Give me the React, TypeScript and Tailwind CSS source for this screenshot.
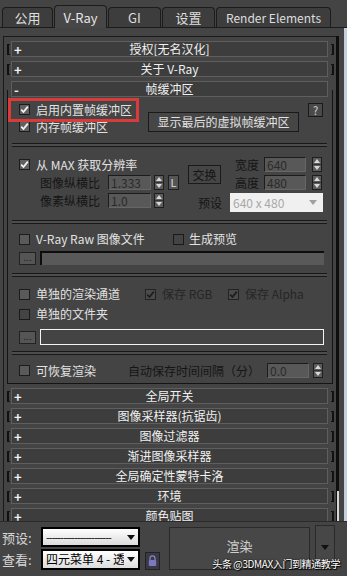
import React from 'react';

type Box = 'on' | 'off' | 'hollow' | 'dim';

function Check({ kind }: { kind: Box }) {
  const base =
    kind === 'on'
      ? 'bg-[#606060] border-[#1c1c1c]'
      : kind === 'off'
      ? 'bg-[#5a5a5a] border-[#1c1c1c]'
      : kind === 'dim'
      ? 'bg-[#4b4b4b] border-[#222]'
      : 'bg-[#444] border-[#1a1a1a]';
  return (
    <div className={`w-[11px] h-[11px] border shrink-0 flex items-center justify-center ${base}`}>
      {(kind === 'on' || kind === 'dim') && (
        <svg width="9" height="9" viewBox="0 0 9 9">
          <path
            d="M1.2 4.6 L3.5 7 L7.8 1.6"
            fill="none"
            stroke={kind === 'on' ? '#f2f2f2' : '#1e1e1e'}
            strokeWidth="1.8"
          />
        </svg>
      )}
    </div>
  );
}

function Bracket({ side }: { side: 'l' | 'r' }) {
  return (
    <div
      className={
        side === 'l'
          ? 'w-[3px] h-[11px] border-l-2 border-y border-[#111]'
          : 'w-[3px] h-[11px] border-r-2 border-y border-[#111]'
      }
    />
  );
}

function HeaderBar({ sign, title }: { sign: string; title: string }) {
  return (
    <div className="w-[317px] h-[16px] border border-[#5e5e5e] bg-[#3d3d3d] flex items-center text-[#f0f0f0] leading-none">
      <span className="w-[14px] pl-[2px] text-[13px] font-bold">{sign}</span>
      <span className="flex-1 text-center text-[12px]">{title}</span>
      <span className="w-[14px]" />
    </div>
  );
}

function Rollout({ title }: { title: string }) {
  return (
    <div className="flex items-center h-[16px] mt-[4px] ml-[3px]">
      <Bracket side="l" />
      <div className="ml-[1px]">
        <HeaderBar sign="+" title={title} />
      </div>
      <div className="ml-[3px]">
        <Bracket side="r" />
      </div>
    </div>
  );
}

function Spinner() {
  return (
    <div className="w-[10px] h-[15px] bg-[#5c5c5c] border border-[#1e1e1e] flex flex-col items-center justify-around">
      <svg width="6" height="4" viewBox="0 0 6 4">
        <path d="M0 4 L3 0 L6 4 Z" fill="#d8d8d8" />
      </svg>
      <div className="w-full h-px bg-[#333]" />
      <svg width="6" height="4" viewBox="0 0 6 4">
        <path d="M0 0 L3 4 L6 0 Z" fill="#d8d8d8" />
      </svg>
    </div>
  );
}

function Field({ value, w }: { value: string; w: string }) {
  return (
    <div
      className={`${w} h-[15px] bg-[#585858] border-t border-l border-[#1c1c1c] border-r border-b border-r-[#666] border-b-[#666] text-[#2a2a2a] text-[12px] leading-[13px] pl-[2px] overflow-hidden`}
    >
      {value}
    </div>
  );
}

function Sep() {
  return <div className="ml-[4px] w-[315px] h-[4px] border-y border-[#181818] bg-[#4d4d4d]" />;
}

function Dots() {
  return (
    <div className="w-[17px] h-[13px] bg-[#555] border border-[#222] text-[#222] text-[10px] leading-[8px] text-center">...</div>
  );
}

const light = 'text-[#e2e2e2]';
const dark = 'text-[#151515]';

export default function App() {
  const tabs = ['公用', 'V-Ray', 'GI', '设置', 'Render Elements'];
  const widths = ['w-[51px]', 'w-[53px]', 'w-[53px]', 'w-[53px]', 'w-[115px]'];
  return (
    <div className="w-[347px] h-[576px] bg-[#444] overflow-hidden flex flex-col text-[12px] leading-none font-['Noto_Sans_CJK_SC','Noto_Sans',sans-serif] select-none">
      {/* tabs */}
      <div className="h-[28px] flex items-end pl-[2px] gap-[1px] border-b border-[#1c1c1c] shrink-0">
        {tabs.map((t, i) =>
          i === 1 ? (
            <div
              key={t}
              className={`${widths[i]} h-[23px] -mb-px bg-[#474747] border-x border-t border-[#1c1c1c] rounded-t-[4px] flex items-center justify-center text-[#e6e6e6] text-[13px]`}
            >
              {t}
            </div>
          ) : (
            <div
              key={t}
              className={`${widths[i]} h-[20px] bg-[#3d3d3d] border-x border-t border-[#1c1c1c] rounded-t-[4px] flex items-center justify-center text-[#dedede] ${i === 4 ? 'text-[12px]' : 'text-[13px]'}`}
            >
              {t}
            </div>
          )
        )}
      </div>

      {/* main scroll region */}
      <div className="h-[493px] flex shrink-0">
        <div className="pl-[3px] pt-[8px]">
          <div className="w-[333px] h-[485px] border-l border-t border-[#1a1a1a] overflow-hidden flex flex-col">
            <Rollout title="授权[无名汉化]" />
            <Rollout title="关于 V-Ray" />

            {/* open rollout */}
            <div className="mt-[4px] ml-[7px]">
              <HeaderBar sign="-" title="帧缓冲区" />
            </div>
            <div className="-mt-[7px] ml-[3px] w-[326px] border-x border-b border-[#141414] pt-[7px]">
              {/* section A */}
              <div className="relative h-[46px] flex items-start">
                <div className="w-[140px] pl-[11px] pt-[7px]">
                  <div className="flex items-center gap-[6px] h-[11px]">
                    <Check kind="on" />
                    <span className={light}>启用内置帧缓冲区</span>
                  </div>
                  <div className="flex items-center gap-[6px] h-[11px] mt-[6px]">
                    <Check kind="on" />
                    <span className={light}>内存帧缓冲区</span>
                  </div>
                </div>
                <div className={`mt-[15px] w-[151px] h-[20px] border border-[#1a1a1a] bg-[#464646] flex items-center justify-center ${light}`}>
                  显示最后的虚拟帧缓冲区
                </div>
                <div className="ml-[9px] mt-[6px] w-[15px] h-[14px] border border-[#1a1a1a] bg-[#4a4a4a] flex items-center justify-center text-[#d8d8d8] text-[11px]">
                  ?
                </div>
                <div className="absolute left-0 top-[1px] w-[131px] h-[24px] border-[3px] border-[#d93b3b]" />
              </div>
              <Sep />

              {/* section B */}
              <div className="h-[73px] flex items-start">
                <div className="w-[180px]">
                  <div className="pl-[11px] pt-[12px] flex items-center gap-[6px] h-[23px]">
                    <Check kind="on" />
                    <span className={light}>从 MAX 获取分辨率</span>
                  </div>
                  <div className="mt-[5px] flex items-center h-[15px]">
                    <span className={`w-[92px] text-right ${dark}`}>图像纵横比</span>
                    <div className="ml-[8px]">
                      <Field value="1.333" w="w-[43px]" />
                    </div>
                    <div className="ml-[3px]">
                      <Spinner />
                    </div>
                    <div className="ml-[4px] w-[11px] h-[15px] bg-[#555] border border-[#1e1e1e] text-[#dcdcdc] text-[11px] flex items-center justify-center">
                      L
                    </div>
                  </div>
                  <div className="mt-[3px] flex items-center h-[15px]">
                    <span className={`w-[92px] text-right ${dark}`}>像素纵横比</span>
                    <div className="ml-[8px]">
                      <Field value="1.0" w="w-[43px]" />
                    </div>
                    <div className="ml-[3px]">
                      <Spinner />
                    </div>
                  </div>
                </div>
                <div className="pt-[10px] flex flex-col">
                  <div className="flex items-start">
                    <div className={`mt-[8px] w-[33px] h-[19px] border border-[#1a1a1a] bg-[#464646] flex items-center justify-center ${dark}`}>
                      交换
                    </div>
                    <div className="ml-[14px] flex flex-col">
                      <div className="flex items-center h-[15px]">
                        <span className={`w-[24px] ${dark}`}>宽度</span>
                        <div className="ml-[5px]">
                          <Field value="640" w="w-[42px]" />
                        </div>
                        <div className="ml-[6px]">
                          <Spinner />
                        </div>
                      </div>
                      <div className="mt-[3px] flex items-center h-[15px]">
                        <span className={`w-[24px] ${dark}`}>高度</span>
                        <div className="ml-[5px]">
                          <Field value="480" w="w-[42px]" />
                        </div>
                        <div className="ml-[6px]">
                          <Spinner />
                        </div>
                      </div>
                    </div>
                  </div>
                  <div className="mt-[3px] ml-[10px] flex items-center h-[19px]">
                    <span className={`w-[24px] ${dark}`}>预设</span>
                    <div className="ml-[8px] w-[93px] h-[19px] bg-[#f0f0f0] flex items-center justify-between px-[3px] text-[#a8a8a8]">
                      <span>640 x 480</span>
                      <svg width="8" height="5" viewBox="0 0 8 5" className="mr-[3px]">
                        <path d="M0 0 L8 0 L4 5 Z" fill="#a0a0a0" />
                      </svg>
                    </div>
                  </div>
                </div>
              </div>
              <Sep />

              {/* section C */}
              <div className="h-[49px] pl-[11px] pt-[9px]">
                <div className="flex items-center h-[12px]">
                  <div className="w-[154px] flex items-center gap-[6px]">
                    <Check kind="off" />
                    <span className={light}>V-Ray Raw 图像文件</span>
                  </div>
                  <div className="flex items-center gap-[5px]">
                    <Check kind="hollow" />
                    <span className={light}>生成预览</span>
                  </div>
                </div>
                <div className="mt-[6px] flex items-center">
                  <Dots />
                  <div className="ml-[4px] w-[284px] h-[14px] bg-[#595959] border-t-2 border-l-2 border-[#0d0d0d]" />
                </div>
              </div>
              <Sep />

              {/* section D */}
              <div className="h-[74px] pl-[11px] pt-[11px]">
                <div className="flex items-center h-[12px]">
                  <div className="w-[126px] flex items-center gap-[6px]">
                    <Check kind="off" />
                    <span className={light}>单独的渲染通道</span>
                  </div>
                  <div className="w-[83px] flex items-center gap-[6px]">
                    <Check kind="dim" />
                    <span className="text-[#262626]">保存 RGB</span>
                  </div>
                  <div className="flex items-center gap-[6px]">
                    <Check kind="dim" />
                    <span className="text-[#262626]">保存 Alpha</span>
                  </div>
                </div>
                <div className="mt-[8px] flex items-center h-[12px] gap-[6px]">
                  <Check kind="hollow" />
                  <span className={light}>单独的文件夹</span>
                </div>
                <div className="mt-[9px] flex items-center h-[16px]">
                  <Dots />
                  <div className="ml-[4px] w-[284px] h-[16px] border border-[#f4f4f4] bg-[#444]" />
                </div>
              </div>
              <Sep />

              {/* section E */}
              <div className="h-[28px] pl-[11px] pt-[8px]">
                <div className="flex items-center h-[15px]">
                  <div className="w-[109px] flex items-center gap-[6px]">
                    <Check kind="off" />
                    <span className={light}>可恢复渲染</span>
                  </div>
                  <span className={`w-[139px] ${dark}`}>自动保存时间间隔（分）</span>
                  <Field value="0.0" w="w-[42px]" />
                  <div className="ml-[4px]">
                    <Spinner />
                  </div>
                </div>
              </div>
            </div>

            <div className="h-[4px]" />
            <Rollout title="全局开关" />
            <Rollout title="图像采样器(抗锯齿)" />
            <Rollout title="图像过滤器" />
            <Rollout title="渐进图像采样器" />
            <Rollout title="全局确定性蒙特卡洛" />
            <Rollout title="环境" />
            <Rollout title="颜色贴图" />
          </div>
        </div>

        {/* scrollbar */}
        <div className="mt-[8px] w-[3px] h-[485px] bg-[#0e0e0e] flex flex-col justify-end">
          <div className="ml-px w-[2px] h-[30px] bg-[#d6d6d6]" />
        </div>
        <div className="w-[5px]" />
        <div className="w-[3px] h-full bg-[#c3cfdc]" />
      </div>

      {/* bottom bar */}
      <div className="relative flex-1 flex items-start border-t border-[#2a2a2a]">
        <div className="pt-[5px]">
          <div className="flex items-center h-[20px]">
            <span className="w-[41px] pl-[2px] text-[#d6d6d6] text-[13px]">预设:</span>
            <div className="w-[99px] h-[20px] border-2 border-black bg-gradient-to-b from-white to-[#dcdcdc] flex items-center justify-between px-[3px]">
              <span className="text-black text-[11px] tracking-[-1px]">-----------------------</span>
              <svg width="8" height="5" viewBox="0 0 8 5">
                <path d="M0 0 L8 0 L4 5 Z" fill="#111" />
              </svg>
            </div>
          </div>
          <div className="mt-[1px] flex items-center h-[22px]">
            <span className="w-[41px] pl-[2px] text-[#d6d6d6] text-[13px]">查看:</span>
            <div className="w-[99px] h-[21px] border-2 border-black bg-gradient-to-b from-white to-[#dcdcdc] flex items-center justify-between px-[3px]">
              <span className="text-black text-[12px] whitespace-nowrap overflow-hidden w-[78px]">四元菜单 4 - 透视</span>
              <svg width="8" height="5" viewBox="0 0 8 5">
                <path d="M0 0 L8 0 L4 5 Z" fill="#111" />
              </svg>
            </div>
            <div className="ml-[5px] mt-[4px] w-[15px] h-[18px] bg-[#3a3a46] border border-[#222] flex items-center justify-center">
              <svg width="9" height="12" viewBox="0 0 9 12">
                <path d="M2 5 V3.3 a2.5 2.5 0 0 1 5 0 V5" fill="none" stroke="#8a86c8" strokeWidth="1.2" />
                <rect x="0.8" y="5" width="7.4" height="6" rx="1" fill="#7d78c0" />
              </svg>
            </div>
          </div>
        </div>
        <div className="ml-[9px] mt-[5px] w-[141px] h-[43px] border border-[#2a2a2a] bg-[#474747] flex items-start justify-center pt-[11px] text-[#cfcfcf] text-[13px]">
          渲染
        </div>
        <div className="ml-[5px] mt-[3px] w-[20px] h-[45px] border border-[#2a2a2a] bg-[#474747] flex items-center justify-center">
          <svg width="8" height="5" viewBox="0 0 8 5">
            <path d="M0 0 L8 0 L4 5 Z" fill="#111" />
          </svg>
        </div>
        <div className="absolute right-[7px] bottom-[7px] text-white text-[10px] tracking-[-0.4px] whitespace-nowrap [text-shadow:0_0_2px_#000,1px_1px_1px_#000]">
          头条 @3DMAX入门到精通教学
        </div>
      </div>
    </div>
  );
}
